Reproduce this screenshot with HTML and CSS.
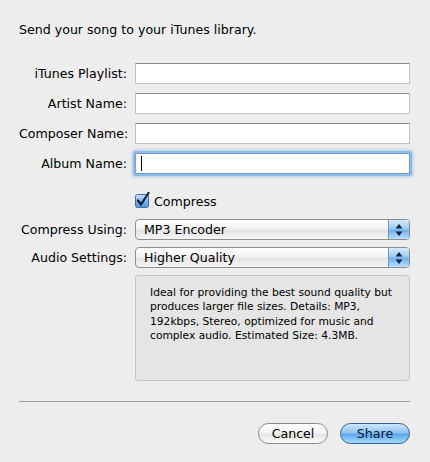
FILE: index.html
```html
<!DOCTYPE html>
<html>
<head>
	<title>Share to iTunes</title>
	<meta charset="utf-8">
	<meta name="viewport" content="width=device-width, initial-scale=1">
	<link rel="stylesheet" href="styles.css">
</head>
<body>
	<div class="dialog">
		<p class="intro">Send your song to your iTunes library.</p>

		<form class="share-form">
			<div class="row">
				<label for="playlist">iTunes Playlist:</label>
				<input type="text" id="playlist" class="field">
			</div>
			<div class="row">
				<label for="artist">Artist Name:</label>
				<input type="text" id="artist" class="field">
			</div>
			<div class="row">
				<label for="composer">Composer Name:</label>
				<input type="text" id="composer" class="field">
			</div>
			<div class="row">
				<label for="album">Album Name:</label>
				<div class="field focused"><span class="caret"></span></div>
			</div>

			<div class="row check-row">
				<span class="spacer"></span>
				<span class="checkbox">
					<svg width="16" height="16" viewBox="0 0 16 16">
						<defs>
							<linearGradient id="cb" x1="0" y1="0" x2="0" y2="1">
								<stop offset="0" stop-color="#cfe6fb"/>
								<stop offset="0.5" stop-color="#7fb8ec"/>
								<stop offset="1" stop-color="#4b95df"/>
							</linearGradient>
						</defs>
						<rect x="0.5" y="2.5" width="13" height="13" rx="2" fill="url(#cb)" stroke="#3f6fa6"/>
						<path d="M3 8.5 L6 12.5 L13.5 1" fill="none" stroke="#0c1d3d" stroke-width="2.2" stroke-linecap="round" stroke-linejoin="round"/>
					</svg>
				</span>
				<span class="check-label">Compress</span>
			</div>

			<div class="row popup-row">
				<label>Compress Using:</label>
				<div class="popup">
					<span class="popup-value">MP3 Encoder</span>
					<span class="stepper">
						<svg width="8" height="12" viewBox="0 0 8 12"><path d="M4 0 L7.5 4.5 L0.5 4.5Z M4 12 L7.5 7.5 L0.5 7.5Z" fill="#102544"/></svg>
					</span>
				</div>
			</div>
			<div class="row popup-row">
				<label>Audio Settings:</label>
				<div class="popup">
					<span class="popup-value">Higher Quality</span>
					<span class="stepper">
						<svg width="8" height="12" viewBox="0 0 8 12"><path d="M4 0 L7.5 4.5 L0.5 4.5Z M4 12 L7.5 7.5 L0.5 7.5Z" fill="#102544"/></svg>
					</span>
				</div>
			</div>

			<div class="row box-row">
				<span class="spacer"></span>
				<div class="details">
					Ideal for providing the best sound quality but<br>
					produces larger file sizes. Details: MP3,<br>
					192kbps, Stereo, optimized for music and<br>
					complex audio. Estimated Size: 4.3MB.
				</div>
			</div>
		</form>

		<hr class="separator">

		<div class="buttons">
			<button type="button" class="btn">Cancel</button>
			<button type="button" class="btn primary">Share</button>
		</div>
	</div>
</body>
</html>
```

FILE: styles.css
```css
body {
	margin: 0;
	background-color: #ededed;
	font-family: "DejaVu Sans", "Liberation Sans", sans-serif;
	font-size: 12.6px;
	color: #000;
}

.dialog {
	padding: 22px 20px 0 19px;
}

.intro {
	margin: 0 0 25px 0;
	line-height: 16px;
}

.share-form {
	display: flex;
	flex-direction: column;
}

.row {
	display: flex;
	align-items: center;
	gap: 8px;
	margin-bottom: 9px;
}

.row label,
.spacer {
	width: 108px;
	flex: none;
	text-align: right;
	white-space: nowrap;
}

.field {
	box-sizing: border-box;
	width: 275px;
	height: 21px;
	margin: 0;
	padding: 0 3px;
	background: #fff;
	border: 1px solid #c2c2c2;
	border-top-color: #8c8c8c;
	border-radius: 0;
	font: inherit;
}

.focused {
	display: flex;
	align-items: center;
	border: 1px solid #6e9fcf;
	box-shadow: 0 0 0 2px #8ebbe6, 0 0 3px 3px rgba(120, 170, 225, 0.5);
	border-radius: 1px;
}

.caret {
	display: block;
	width: 1px;
	height: 15px;
	background: #000;
	margin-left: 2px;
}

.check-row {
	margin-top: 11px;
	margin-bottom: 10px;
	gap: 0;
}

.check-row .spacer {
	margin-right: 8px;
}

.checkbox {
	width: 16px;
	height: 16px;
	margin-top: -3px;
}

.check-label {
	margin-left: 3px;
}

.popup-row {
	margin-bottom: 7px;
}

.popup {
	box-sizing: border-box;
	width: 275px;
	height: 21px;
	display: flex;
	align-items: stretch;
	border: 1px solid #8e8e8e;
	border-radius: 4px;
	background: linear-gradient(#ffffff, #f1f1f1 45%, #e4e4e4 55%, #f6f6f6);
	overflow: hidden;
}

.popup-value {
	flex: 1;
	padding-left: 8px;
	line-height: 19px;
}

.stepper {
	width: 20px;
	display: flex;
	align-items: center;
	justify-content: center;
	border-left: 1px solid #6f97c4;
	background: linear-gradient(#d6ebfc, #9fcaf2 45%, #6fb0ee 55%, #b9e0fd);
}

.box-row {
	margin-bottom: 0;
}

.details {
	box-sizing: border-box;
	width: 275px;
	height: 106px;
	padding: 10px 8px 0 14px;
	background: #e5e5e5;
	border: 1px solid #c6c6c6;
	border-radius: 3px;
	font-size: 10.7px;
	line-height: 14.3px;
}

.separator {
	margin: 20px 0 0 0;
	height: 0;
	border: none;
	border-top: 1px solid #9a9a9a;
}

.buttons {
	display: flex;
	justify-content: flex-end;
	gap: 12px;
	margin-top: 21px;
}

.btn {
	width: 70px;
	height: 21px;
	padding: 0;
	border: 1px solid #8a8a8a;
	border-radius: 11px;
	background: linear-gradient(#ffffff, #f4f4f4 45%, #e6e6e6 55%, #fbfbfb);
	font: inherit;
	color: #000;
}

.primary {
	border-color: #3b5f8e;
	background: linear-gradient(#cfe7fd, #8ec3f2 45%, #5ea7ec 55%, #a6dcff);
	color: #0a1a33;
}
```
